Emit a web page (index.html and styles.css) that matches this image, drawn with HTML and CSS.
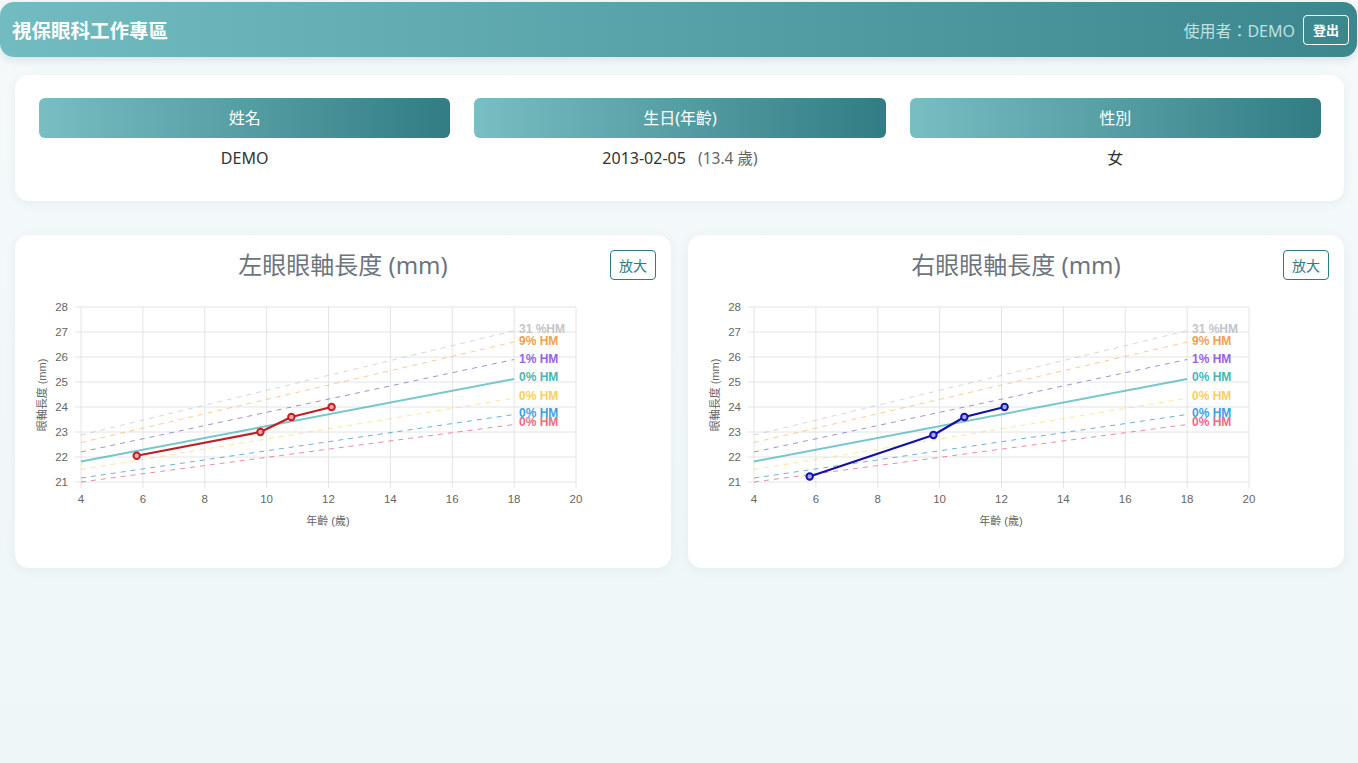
FILE: index.html
```html
<!DOCTYPE html>
<html lang="zh-Hant">
<head>
    <meta charset="UTF-8">
    <meta name="viewport" content="width=device-width, initial-scale=1.0">
    <title>視保眼科工作專區</title>
    <link rel="stylesheet" href="styles.css">
</head>
<body>
    <header class="topbar">
        <h1 class="brand">視保眼科工作專區</h1>
        <div class="user-box">
            <span class="user-name">使用者：DEMO</span>
            <button class="btn-logout">登出</button>
        </div>
    </header>

    <main class="page">
        <!-- patient info -->
        <section class="card patient-card">
            <div class="patient-col">
                <div class="col-head">姓名</div>
                <div class="col-value">DEMO</div>
            </div>
            <div class="patient-col">
                <div class="col-head">生日(年齡)</div>
                <div class="col-value">2013-02-05 <span class="age">(13.4 歲)</span></div>
            </div>
            <div class="patient-col">
                <div class="col-head">性別</div>
                <div class="col-value">女</div>
            </div>
        </section>

        <!-- axial length charts -->
        <section class="chart-row">
            <div class="card chart-card">
                <div class="chart-head">
                    <h2 class="chart-title">左眼眼軸長度 (mm)</h2>
                    <button class="btn-zoom">放大</button>
                </div>
                <svg class="axial-chart" id="chart-left" width="626" height="250" viewBox="0 0 626 250"></svg>
            </div>
            <div class="card chart-card">
                <div class="chart-head">
                    <h2 class="chart-title">右眼眼軸長度 (mm)</h2>
                    <button class="btn-zoom">放大</button>
                </div>
                <svg class="axial-chart" id="chart-right" width="626" height="250" viewBox="0 0 626 250"></svg>
            </div>
        </section>
    </main>

    <script>
        const NS = 'http://www.w3.org/2000/svg';
        const X = age => 51 + (age - 4) * 30.9375;
        const Y = mm => 192 - (mm - 21) * 25;

        // reference curves (percentile of high myopia)
        const refLines = [
            { label: '31 %HM', color: 'rgba(180,182,188,0.55)', text: '#c3c5c9', from: 22.88, to: 27.05, ly: 39, dash: true },
            { label: '9% HM', color: 'rgba(255,159,64,0.55)', text: '#f3a04e', from: 22.58, to: 26.6, ly: 51, dash: true },
            { label: '1% HM', color: 'rgba(120,100,190,0.7)', text: '#9a62e6', from: 22.2, to: 25.9, ly: 69, dash: true },
            { label: '0% HM', color: 'rgba(75,180,185,0.75)', text: '#4bb5b5', from: 21.82, to: 25.12, ly: 87, dash: false },
            { label: '0% HM', color: 'rgba(255,205,86,0.55)', text: '#fbcf5e', from: 21.5, to: 24.35, ly: 106, dash: true },
            { label: '0% HM', color: 'rgba(54,140,200,0.7)', text: '#3c9fe0', from: 21.16, to: 23.7, ly: 123, dash: true },
            { label: '0% HM', color: 'rgba(230,90,120,0.7)', text: '#ee6b86', from: 21.0, to: 23.3, ly: 132, dash: true }
        ];

        function el(parent, tag, attrs, text) {
            const node = document.createElementNS(NS, tag);
            for (const k in attrs) node.setAttribute(k, attrs[k]);
            if (text) node.textContent = text;
            parent.appendChild(node);
            return node;
        }

        function drawChart(svg, points, color, fill) {
            // grid
            for (let v = 21; v <= 28; v++) {
                el(svg, 'line', { x1: 45, x2: 546, y1: Y(v), y2: Y(v), class: 'grid' });
                el(svg, 'text', { x: 38, y: Y(v) + 4, class: 'tick', 'text-anchor': 'end' }, v);
            }
            for (let a = 4; a <= 20; a += 2) {
                el(svg, 'line', { x1: X(a), x2: X(a), y1: 17, y2: 198, class: 'grid' });
                el(svg, 'text', { x: X(a), y: 213, class: 'tick', 'text-anchor': 'middle' }, a);
            }
            el(svg, 'text', { x: 298, y: 235, class: 'axis-title', 'text-anchor': 'middle' }, '年齡 (歲)');
            el(svg, 'text', { x: 0, y: 0, class: 'axis-title', 'text-anchor': 'middle', transform: 'translate(16 105) rotate(-90)' }, '眼軸長度 (mm)');

            refLines.forEach(r => {
                el(svg, 'line', {
                    x1: X(4), y1: Y(r.from), x2: X(18), y2: Y(r.to),
                    stroke: r.color, 'stroke-width': r.dash ? 1 : 2,
                    'stroke-dasharray': r.dash ? '5 5' : 'none'
                });
            });
            refLines.forEach(r => {
                el(svg, 'text', { x: 489, y: r.ly + 4, class: 'ref-label', fill: r.text }, r.label);
            });

            const pts = points.map(p => X(p[0]) + ',' + Y(p[1])).join(' ');
            el(svg, 'polyline', { points: pts, fill: 'none', stroke: color, 'stroke-width': 2.2, 'stroke-linejoin': 'round' });
            points.forEach(p => {
                el(svg, 'circle', { cx: X(p[0]), cy: Y(p[1]), r: 3.2, fill: fill, stroke: color, 'stroke-width': 2 });
            });
        }

        drawChart(document.getElementById('chart-left'),
            [[5.8, 22.05], [9.8, 23.0], [10.8, 23.6], [12.1, 24.0]], '#c01f24', '#f3a5a5');
        drawChart(document.getElementById('chart-right'),
            [[5.8, 21.22], [9.8, 22.88], [10.8, 23.6], [12.1, 24.0]], '#1212a6', '#a8a8f0');
    </script>
</body>
</html>
```

FILE: styles.css
```css
body {
    margin: 0;
    font-family: "Noto Sans", "Noto Sans CJK TC", sans-serif;
    background: linear-gradient(180deg, #f5f9fa, #eef6f8);
    color: #333;
    min-height: 763px;
}

.topbar {
    margin: 2px 1px 0 0;
    height: 55px;
    padding: 0 8px 0 12px;
    display: flex;
    justify-content: space-between;
    align-items: center;
    background: linear-gradient(90deg, #72bcc1, #3b878d);
    border-radius: 14px;
    box-shadow: 0 3px 8px rgba(40, 100, 110, 0.15);
}
.brand {
    margin: 0;
    color: #fff;
    font-size: 19.5px;
    font-weight: 700;
    font-family: "Noto Sans CJK TC", sans-serif;
}
.user-box {
    display: flex;
    align-items: center;
    gap: 8px;
}
.user-name {
    color: #bfe0e2;
    font-size: 16px;
}
.btn-logout {
    width: 46px;
    height: 30px;
    background: transparent;
    border: 1px solid #fff;
    border-radius: 4px;
    color: #fff;
    font-size: 13px;
    font-weight: 700;
    font-family: "Noto Sans CJK TC", sans-serif;
    padding: 0;
}

.page {
    padding: 18px 14px 0 15px;
}
.card {
    background: #fff;
    border-radius: 14px;
    box-shadow: 0 2px 10px rgba(60, 120, 130, 0.08);
}

.patient-card {
    display: grid;
    grid-template-columns: repeat(3, 1fr);
    gap: 24px;
    padding: 23px 23px 31px 24px;
}
.col-head {
    height: 40px;
    line-height: 40px;
    text-align: center;
    color: #fff;
    font-size: 16px;
    border-radius: 6px;
    background: linear-gradient(90deg, #78bec3, #317d83);
}
.col-value {
    margin-top: 8px;
    height: 24px;
    line-height: 24px;
    text-align: center;
    font-size: 16px;
    color: #333;
}
.age {
    color: #666;
    font-size: 15.5px;
    margin-left: 8px;
}

.chart-row {
    margin-top: 34px;
    display: grid;
    grid-template-columns: 1fr 1fr;
    gap: 17px;
}
.chart-card {
    padding: 15px 15px 28px;
    height: 290px;
}
.chart-head {
    display: grid;
    grid-template-columns: 1fr auto 1fr;
    align-items: center;
    height: 30px;
}
.chart-title {
    grid-column: 2;
    margin: 0;
    font-size: 24px;
    font-weight: 400;
    line-height: 30px;
    color: #6c757d;
}
.btn-zoom {
    grid-column: 3;
    justify-self: end;
    width: 46px;
    height: 30px;
    padding: 0;
    background: #fff;
    border: 1px solid #2e7b82;
    border-radius: 4px;
    color: #2e7b82;
    font-size: 14px;
    font-family: "Noto Sans CJK TC", sans-serif;
}
.axial-chart {
    display: block;
    margin-top: 10px;
}
.axial-chart .grid {
    stroke: #e4e4e4;
    stroke-width: 1;
}
.axial-chart .tick {
    font-family: "Liberation Sans", Arial, sans-serif;
    font-size: 11.5px;
    fill: #666;
}
.axial-chart .axis-title {
    font-family: "Liberation Sans", "Noto Sans CJK TC", sans-serif;
    font-size: 11px;
    fill: #666;
}
.axial-chart .ref-label {
    font-family: "Liberation Sans", Arial, sans-serif;
    font-size: 12px;
    font-weight: 700;
}
```
